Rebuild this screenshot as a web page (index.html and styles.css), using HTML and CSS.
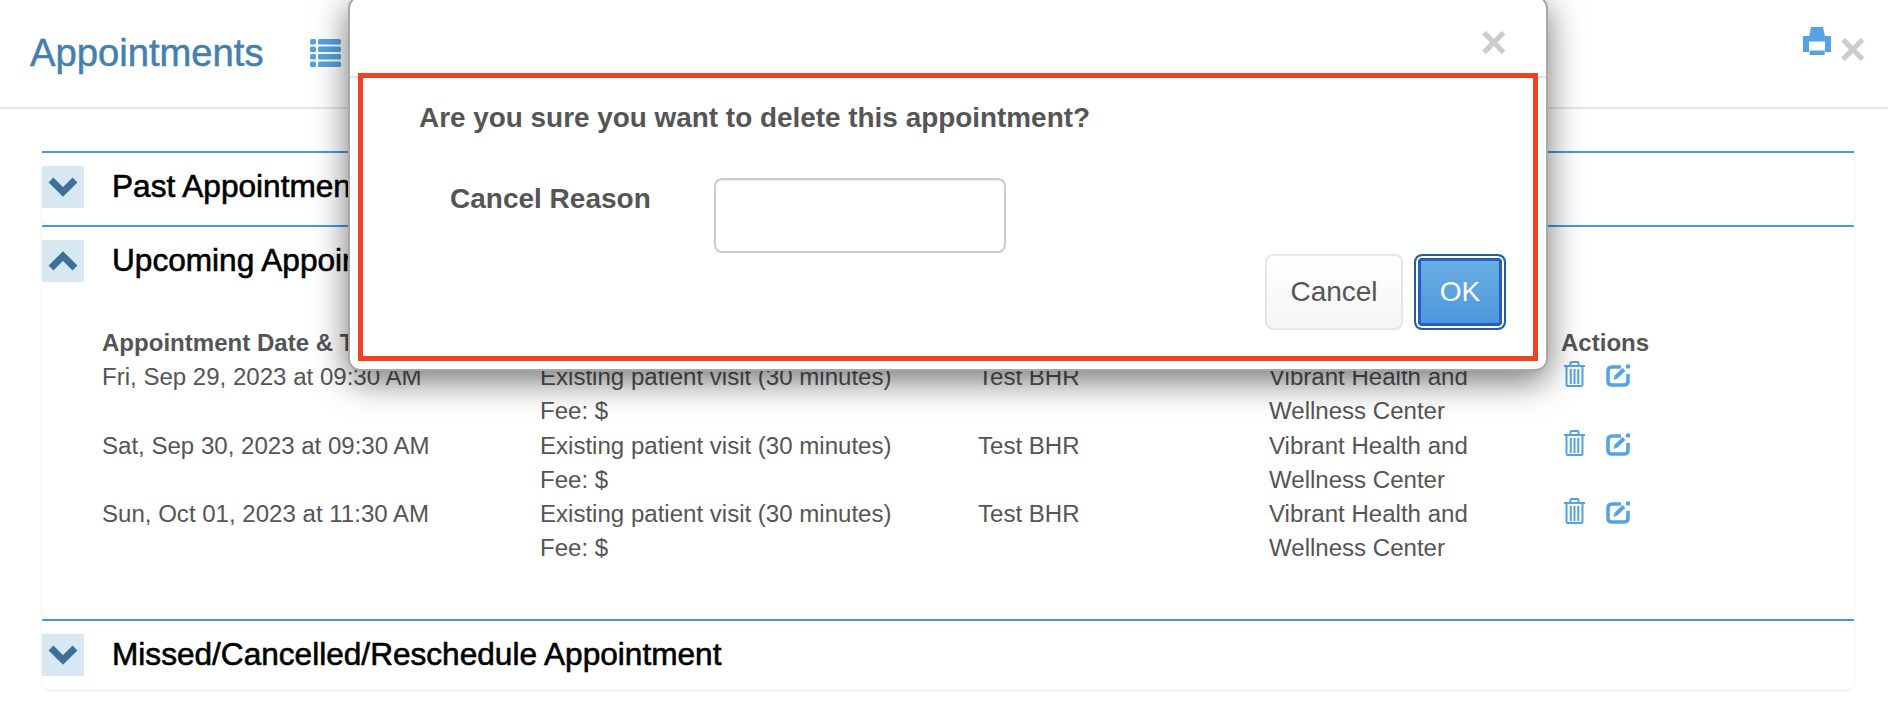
FILE: index.html
```html
<!DOCTYPE html>
<html lang="en">
<head>
<meta charset="utf-8">
<title>Appointments</title>
<link rel="stylesheet" href="styles.css">
</head>
<body>
<div class="page">
  <header class="topbar">
    <h1 class="title">Appointments</h1>
    <svg class="list-icon" viewBox="0 0 31 28"><g fill="#55a2e4"><rect x="0" y="0" width="6" height="5.500" rx="1.500"/><rect x="0" y="7.500" width="6" height="5.500" rx="1.500"/><rect x="0" y="15" width="6" height="5.500" rx="1.500"/><rect x="0" y="22.500" width="6" height="5.500" rx="1.500"/><rect x="8" y="0" width="23" height="5.500" rx="1.500"/><rect x="8" y="7.500" width="23" height="5.500" rx="1.500"/><rect x="8" y="15" width="23" height="5.500" rx="1.500"/><rect x="8" y="22.500" width="23" height="5.500" rx="1.500"/></g></svg>
    <div class="topbar-right">
      <svg class="print-icon" viewBox="0 0 28 28"><g fill="#55a2e4"><path d="M8 0h12l2.300 11H6z"/><path d="M1 9h26a1 1 0 0 1 1 1v15h-6V14.500H6V25H0V10a1 1 0 0 1 1-1z"/><rect x="6.700" y="23.500" width="15" height="4.500"/></g></svg>
      <span class="close close-page">×</span>
    </div>
  </header>
  <main class="accordion">
    <section class="panel panel-short">
      <div class="panel-head">
        <span class="toggle"><svg viewBox="0 0 42 42"><polyline points="9,14 21,26 33,14"/></svg></span>
        <h2 class="panel-title">Past Appointments</h2>
      </div>
    </section>
    <section class="panel panel-open">
      <div class="panel-head">
        <span class="toggle"><svg viewBox="0 0 42 42"><polyline points="9,28 21,16 33,28"/></svg></span>
        <h2 class="panel-title">Upcoming Appointments</h2>
      </div>
      <div class="table">
        <div class="row row-head"><div>Appointment Date &amp; Time</div><div>Appointment Type</div><div>Provider</div><div>Location</div><div>Actions</div></div>
        <div class="row">
          <div>Fri, Sep 29, 2023 at 09:30 AM</div>
          <div>Existing patient visit (30 minutes)<br>Fee: $</div>
          <div>Test BHR</div>
          <div>Vibrant Health and<br>Wellness Center</div>
          <div class="actions">
            <svg class="trash" viewBox="0 0 21 26"><use href="#trash-shape"/></svg>
            <svg class="edit" viewBox="0 0 25 23"><use href="#edit-shape"/></svg>
          </div>
        </div>
        <div class="row">
          <div>Sat, Sep 30, 2023 at 09:30 AM</div>
          <div>Existing patient visit (30 minutes)<br>Fee: $</div>
          <div>Test BHR</div>
          <div>Vibrant Health and<br>Wellness Center</div>
          <div class="actions">
            <svg class="trash" viewBox="0 0 21 26"><use href="#trash-shape"/></svg>
            <svg class="edit" viewBox="0 0 25 23"><use href="#edit-shape"/></svg>
          </div>
        </div>
        <div class="row">
          <div>Sun, Oct 01, 2023 at 11:30 AM</div>
          <div>Existing patient visit (30 minutes)<br>Fee: $</div>
          <div>Test BHR</div>
          <div>Vibrant Health and<br>Wellness Center</div>
          <div class="actions">
            <svg class="trash" viewBox="0 0 21 26"><use href="#trash-shape"/></svg>
            <svg class="edit" viewBox="0 0 25 23"><use href="#edit-shape"/></svg>
          </div>
        </div>
      </div>
    </section>
    <section class="panel panel-last">
      <div class="panel-head">
        <span class="toggle"><svg viewBox="0 0 42 42"><polyline points="9,14 21,26 33,14"/></svg></span>
        <h2 class="panel-title">Missed/Cancelled/Reschedule Appointment</h2>
      </div>
    </section>
  </main>
</div>

<div class="modal">
  <div class="modal-header"><span class="close close-modal">×</span></div>
  <div class="modal-body">
    <p class="question">Are you sure you want to delete this appointment?</p>
    <div class="reason">
      <label class="reason-label" for="reason">Cancel Reason</label>
      <input class="reason-input" id="reason" type="text">
    </div>
    <div class="buttons">
      <button class="btn btn-cancel" type="button">Cancel</button>
      <button class="btn btn-ok" type="button">OK</button>
    </div>
  </div>
  <div class="highlight"></div>
</div>

<svg class="defs" aria-hidden="true">
  <symbol id="trash-shape" viewBox="0 0 21 26">
    <g fill="none" stroke="#55a2e4" stroke-width="2">
      <path d="M6.500 4.500V2Q6.500 1 7.500 1h6q1 0 1 1v2.500"/>
      <path d="M0 5h21"/>
      <path d="M2.500 5v18.500q0 1.500 1.500 1.500h13q1.500 0 1.500-1.500V5"/>
      <path d="M6.800 8v15M10.500 8v15M14.200 8v15"/>
    </g>
  </symbol>
  <symbol id="edit-shape" viewBox="0 0 25 23">
    <g fill="none" stroke="#55a2e4">
      <path d="M15 3H6Q2 3 2 7v10q0 4 4 4h12q4 0 4-4V10" stroke-width="3.600"/>
      <path d="M9.500 13.500l8.500-8" stroke-width="4"/>
    </g>
    <circle cx="22" cy="2.500" r="2.300" fill="#55a2e4"/>
    <path d="M7.500 15.800l.7-3.500 2.800 2.800z" fill="#55a2e4"/>
  </symbol>
</svg>
</body>
</html>
```
FILE: styles.css
```css
* { box-sizing: border-box; }
html, body { margin: 0; height: 100%; }
body {
  position: relative;
  overflow: hidden;
  background: #fff;
  font-family: "Liberation Sans", Arial, sans-serif;
  color: #555;
}
.defs { display: none; }
.page { height: 724px; display: flex; flex-direction: column; }

.topbar {
  height: 109px;
  flex: none;
  display: flex;
  align-items: flex-start;
  padding: 0 22px 0 30px;
  border-bottom: 2px solid #e5e5e5;
}
.title {
  margin: 30px 0 0;
  font-size: 38.200px;
  line-height: 46px;
  font-weight: 400;
  color: #4480ae;
  -webkit-text-stroke: 0.5px #4480ae;
}
.list-icon { width: 31px; height: 28px; margin: 39px 0 0 46px; }
.topbar-right { margin-left: auto; display: flex; align-items: flex-start; }
.print-icon { width: 28px; height: 28px; margin-top: 27px; }
.close { font-weight: 700; color: #ccc; font-size: 46px; line-height: 46px; }
.close-page { margin: 26px 0 0 8px; }

.accordion { margin: 42px 34px 0 40px; display: flex; flex-direction: column; }
.panel {
  border-top: 2px solid #4a98de;
  margin-left: 2px;
  border-radius: 0 0 8px 8px;
  box-shadow: -1px 1px 2px rgba(0,0,0,.05), 1px 1px 2px rgba(0,0,0,.05);
}
.panel-short { height: 74px; }
.panel-open { height: 394px; }
.panel-last { height: 71px; }
.panel-head { display: flex; align-items: center; padding-top: 13px; height: 55px; }
.toggle { width: 42px; height: 42px; flex: none; background: #d8e8f3; }
.toggle svg { display: block; width: 42px; height: 42px; filter: blur(.6px); }
.toggle polyline { fill: none; stroke: #3d6f99; stroke-width: 6.800; }
.panel-title {
  margin: -2px 0 0 28px;
  font-size: 31.600px;
  line-height: 36px;
  font-weight: 400;
  color: #000;
  -webkit-text-stroke: 0.6px #000;
  white-space: nowrap;
}
.table { padding: 44px 0 0 60px; font-size: 24.050px; line-height: 34.300px; }
.row { display: grid; grid-template-columns: 438px 438px 291px 292px 293px; min-height: 68.600px; }
.row-head { min-height: 0; font-weight: 700; line-height: 34px; }
.actions { display: flex; align-items: flex-start; gap: 21px; padding-left: 3px; }
.trash { width: 21px; height: 26px; margin-top: 1px; }
.edit { width: 25px; height: 23px; margin-top: 4px; }

.modal {
  position: absolute;
  left: 348px;
  top: -4px;
  width: 1200px;
  height: 375px;
  background: #fff;
  border: 2px solid #a8a8a8;
  border-radius: 12px;
  box-shadow: 0 10px 34px rgba(0,0,0,.55);
}
.modal-header {
  height: 80px;
  border-bottom: 2px solid #e5e5e5;
  display: flex;
  justify-content: flex-end;
  padding: 21px 39px 0 0;
}
.close-modal { line-height: 46px; }
.modal-body { position: relative; height: 290px; }
.question { margin: 0; padding: 23px 0 0 69px; font-size: 27.900px; line-height: 34px; font-weight: 700; color: #555; }
.reason { display: flex; align-items: flex-start; margin-top: 41px; padding-left: 100px; }
.reason-label { width: 264px; padding-top: 6px; font-size: 28px; line-height: 34px; font-weight: 700; }
.reason-input {
  width: 292px;
  height: 75px;
  margin-top: 2px;
  border: 2px solid #ccc;
  border-radius: 8px;
  background: #fff;
  box-shadow: inset 0 1px 1px rgba(0,0,0,.075);
}
.buttons { display: flex; justify-content: flex-end; gap: 11px; margin-top: 1px; padding-right: 40px; }
.btn {
  height: 76px;
  font-family: inherit;
  font-size: 28px;
  padding: 0;
  border-radius: 8px;
}
.btn-cancel {
  width: 138px;
  color: #555;
  border: 2px solid #e6e6e6;
  background: linear-gradient(#fff, #f5f5f5);
}
.btn-ok {
  width: 92px;
  color: #fff;
  border: 2px solid #26608f;
  background: linear-gradient(#6cafe5, #4a96dc);
  box-shadow: inset 0 0 0 2px #fff, inset 0 0 0 5px #2a5cc4;
}
.highlight {
  position: absolute;
  left: 8px;
  top: 75px;
  width: 1180px;
  height: 288px;
  border: 5px solid #ee4225;
  pointer-events: none;
}
```
